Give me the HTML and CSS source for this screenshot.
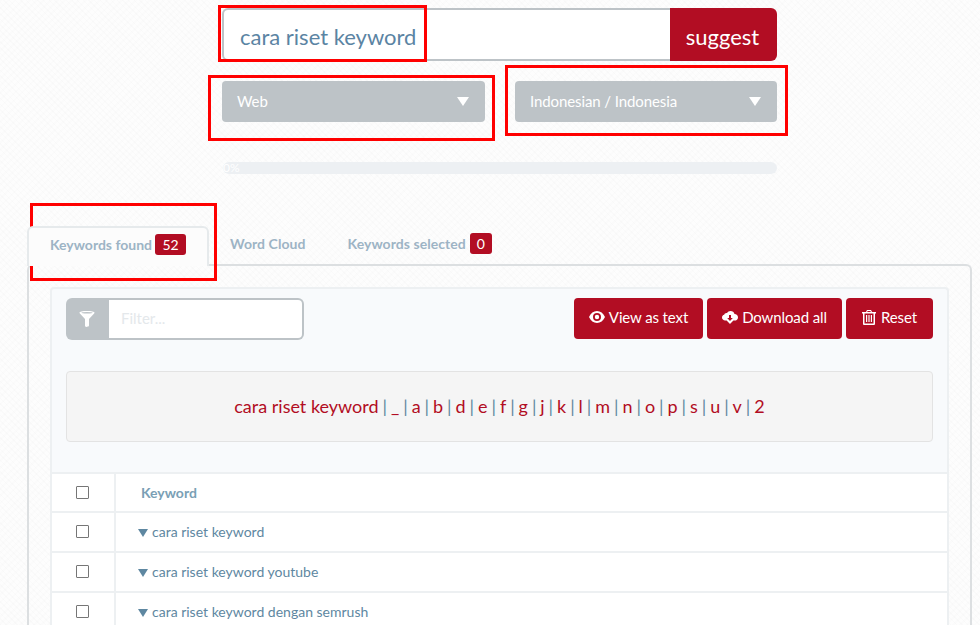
FILE: index.html
```html
<!DOCTYPE html>
<html lang="id">
<head>
<meta charset="utf-8">
<title>Keyword suggest</title>
<link rel="stylesheet" href="styles.css">
</head>
<body>
<div class="page">
  <form class="search">
    <div class="search-input">cara riset keyword</div>
    <button class="search-btn" type="button">suggest</button>
  </form>
  <div class="selects">
    <div class="select"><span>Web</span><i class="caret"></i></div>
    <div class="select"><span>Indonesian / Indonesia</span><i class="caret"></i></div>
  </div>
  <div class="progress"><span>0%</span></div>

  <div class="tabs">
    <div class="tab active"><span>Keywords found</span><b class="badge big">52</b></div>
    <div class="tab"><span>Word Cloud</span></div>
    <div class="tab"><span>Keywords selected</span><b class="badge">0</b></div>
  </div>
  <div class="panel">
    <div class="well">
      <div class="toolbar">
        <div class="filter">
          <span class="filter-icon">
            <svg width="16" height="16" viewBox="0 0 16 16"><path fill="#fff" d="M0.500 1.500C0.500 .6 3.500 0 8 0s7.500 .6 7.500 1.500c0 .5-.2 .9-.6 1.300L10 8v6.200c0 .7-.5 1.300-1.200 1.400L7.400 16C6.600 16 6 15.500 6 14.800V8L1.100 2.800C.7 2.400 .5 2 .5 1.500z"/><ellipse cx="8" cy="1.700" rx="5.600" ry=".8" fill="#bdc3c7"/></svg>
          </span>
          <span class="filter-input">Filter...</span>
        </div>
        <div class="actions">
          <button class="btn btn-view" type="button">
            <svg width="16" height="12" viewBox="0 0 16 12"><path fill="#fff" fill-rule="evenodd" d="M8 0c3.400 0 6.300 2.200 8 6-1.700 3.800-4.600 6-8 6S1.700 9.800 0 6c1.700-3.800 4.600-6 8-6zm0 2a4 4 0 1 0 0 8 4 4 0 0 0 0-8zm0 1.800a2.200 2.200 0 1 1 0 4.400 2.200 2.200 0 0 1 0-4.400z"/></svg>
            <span>View as text</span></button>
          <button class="btn btn-down" type="button">
            <svg width="16" height="13" viewBox="0 0 16 13"><path fill="#fff" fill-rule="evenodd" d="M8.500 0c2 0 3.600 1.300 4 3.100C14.500 3.200 16 4.600 16 6.400 16 8.300 14.500 9.500 12.600 9.500H11.400L8 13 4.600 9.500H3.200C1.400 9.500 0 8.200 0 6.600 0 5.200 .9 4.100 2.200 3.800 2.500 2.500 3.700 1.700 5 2 5.800 .8 7 0 8.500 0zM7 4v3H5.200L8 10l2.800-3H9V4z"/></svg>
            <span>Download all</span></button>
          <button class="btn btn-reset" type="button">
            <svg width="14" height="15" viewBox="0 0 14 15"><path fill="#fff" fill-rule="evenodd" d="M5 0h4l1 2h4v1.500h-1V14a1 1 0 0 1-1 1H2a1 1 0 0 1-1-1V3.500H0V2h4zM5.600 1 5.200 2h3.600L8.400 1zM2.500 3.500V13.500h9V3.500zM4 5h1.200v7H4zm2.400 0h1.200v7H6.400zM8.800 5H10v7H8.800z"/></svg>
            <span>Reset</span></button>
        </div>
      </div>
      <div class="alpha">
        <a>cara riset keyword</a> | <a>_</a> | <a>a</a> | <a>b</a> | <a>d</a> | <a>e</a> | <a>f</a> | <a>g</a> | <a>j</a> | <a>k</a> | <a>l</a> | <a>m</a> | <a>n</a> | <a>o</a> | <a>p</a> | <a>s</a> | <a>u</a> | <a>v</a> | <a>2</a>
      </div>
    </div>
    <div class="table">
      <div class="row head"><div class="cell-check"><i class="check"></i></div><div class="cell-key">Keyword</div></div>
      <div class="row"><div class="cell-check"><i class="check"></i></div><div class="cell-key"><i class="tri"></i>cara riset keyword</div></div>
      <div class="row"><div class="cell-check"><i class="check"></i></div><div class="cell-key"><i class="tri"></i>cara riset keyword youtube</div></div>
      <div class="row"><div class="cell-check"><i class="check"></i></div><div class="cell-key"><i class="tri"></i>cara riset keyword dengan semrush</div></div>
    </div>
  </div>
</div>
<div class="mark m1"></div>
<div class="mark m2"></div>
<div class="mark m3"></div>
<div class="mark m4"></div>
</body>
</html>
```
FILE: styles.css
```css
* { box-sizing: border-box; }
html, body { margin: 0; height: 625px; overflow: hidden; }
body {
  position: relative;
  font-family: Lato, "Open Sans", sans-serif;
  color: #5e87a1;
  background-color: #fdfdfd;
  background-image:
    repeating-linear-gradient(45deg, rgba(0,0,0,.01) 0 1px, transparent 1px 4px),
    repeating-linear-gradient(135deg, rgba(0,0,0,.008) 0 2px, transparent 2px 5px);
}
.page { padding: 8px 8px 0 27px; }
.search { display: flex; width: 555px; height: 53px; margin-left: 195px; }
.search-input {
  flex: 1;
  padding: 9px 16px 0;
  font-size: 22px;
  line-height: 35px;
  color: #5b84a3;
  background: #fff;
  border: 2px solid #bdc3c7;
  border-right: 0;
  border-radius: 6px 0 0 6px;
}
.search-btn {
  width: 107px;
  padding: 3px 2px 0 0;
  font: 400 22px Lato, sans-serif;
  color: #fff;
  background: #b20d23;
  border: 0;
  border-radius: 0 6px 6px 0;
}
.selects { display: flex; justify-content: space-between; width: 555px; margin: 20px 0 0 195px; }
.select {
  display: flex;
  align-items: center;
  justify-content: space-between;
  height: 41px;
  width: 263px;
  padding: 0 15px 2px;
  font-size: 15px;
  letter-spacing: -.1px;
  color: #fff;
  background: #bdc3c7;
  border-radius: 4px;
}
.select + .select { width: 262px; }
.caret { width: 0; height: 0; margin: 1px 1px 0 0; border: 6.500px solid transparent; border-top: 9px solid #fff; border-bottom: 0; }
.progress {
  width: 554px;
  height: 12px;
  margin: 40px 0 0 196px;
  font-size: 12px;
  line-height: 12px;
  color: #fff;
  background: #edf0f3;
  border-radius: 6px;
}
.tabs { display: flex; align-items: flex-start; margin-top: 52px; height: 38px; position: relative; z-index: 1; }
.tab {
  display: flex;
  align-items: center;
  gap: 4px;
  height: 28px;
  padding: 7px 21px 0;
  font-size: 14px;
  font-weight: 700;
  letter-spacing: .06px;
  color: #9db4c5;
  white-space: nowrap;
}
.tab.active {
  gap: 3px;
  width: 182px;
  height: 40px;
  padding: 7px 0 12px 21px;
  letter-spacing: 0;
  background: #fcfcfc;
  border: 2px solid #e6eaec;
  border-bottom: 0;
  border-radius: 6px 6px 0 0;
}
.badge {
  display: block;
  width: 22px;
  font-size: 14px;
  font-weight: 400;
  line-height: 21px;
  color: #fff;
  text-align: center;
  background: #b20d23;
  border-radius: 3px;
}
.badge.big { width: 31px; }
.panel {
  height: 362px;
  padding: 21px 21px 0;
  border: 2px solid #dcdfe1;
  border-bottom: 0;
  border-radius: 6px 6px 0 0;
}
.well {
  height: 185px;
  padding: 9px 14px 0;
  background: #f8fafc;
  border: 2px solid #edf0f2;
  border-bottom: 0;
  border-radius: 4px 4px 0 0;
}
.toolbar { display: flex; justify-content: space-between; align-items: flex-start; }
.filter { display: flex; width: 238px; height: 42px; }
.filter-icon {
  display: flex;
  align-items: center;
  justify-content: center;
  width: 43px;
  padding-right: 1px;
  background: #bdc3c7;
  border-radius: 6px 0 0 6px;
}
.filter-input {
  flex: 1;
  padding: 0 12px;
  font-size: 15px;
  line-height: 37px;
  color: #e4e8eb;
  background: #fff;
  border: 2px solid #bdc3c7;
  border-left: 0;
  border-radius: 0 6px 6px 0;
}
.actions { display: flex; gap: 4px; }
.btn {
  display: flex;
  align-items: center;
  justify-content: center;
  gap: 4px;
  height: 41px;
  padding: 0 0 3px;
  font: 400 15px Lato, sans-serif;
  letter-spacing: -.12px;
  color: #fff;
  background: #b20d23;
  border: 0;
  border-radius: 4px;
}
.btn-view { width: 129px; }
.btn-down { width: 135px; }
.btn-reset { width: 87px; gap: 5px; }
.alpha {
  height: 71px;
  margin-top: 31px;
  font-size: 18px;
  line-height: 69px;
  text-align: center;
  word-spacing: -.67px;
  color: #5e87a1;
  background: #f5f5f5;
  border: 1px solid #e3e3e3;
  border-radius: 4px;
}
.alpha a { color: #b20d23; word-spacing: 0; }
.table { background: #fff; border: 2px solid #edf0f2; border-width: 2px 2px 0; }
.row { display: flex; height: 40px; border-bottom: 2px solid #edf0f2; font-size: 14px; }
.row.head { height: 39px; }
.cell-check { display: flex; align-items: center; justify-content: center; width: 64px; padding: 0 1px 2px 0; border-right: 2px solid #edf0f2; }
.check { display: block; width: 13px; height: 13px; background: #fff; border: 1px solid #767676; border-radius: 1px; }
.head .cell-check { padding-bottom: 0; }
.cell-key { display: flex; align-items: center; padding: 0 0 2px 22px; color: #5e87a1; }
.head .cell-key { padding: 0 0 0 25px; font-weight: 700; color: #7a9fb5; }
.tri { width: 0; height: 0; margin: 3px 4px 0 0; border: 5.500px solid transparent; border-top: 8px solid #5e87a1; border-bottom: 0; }
.mark { position: absolute; border: 3px solid #f00; }
.m1 { left: 218px; top: 5px; width: 209px; height: 57px; }
.m2 { left: 208px; top: 75px; width: 287px; height: 66px; }
.m3 { left: 505px; top: 65px; width: 283px; height: 71px; }
.m4 { left: 30px; top: 203px; width: 187px; height: 78px; }
```
